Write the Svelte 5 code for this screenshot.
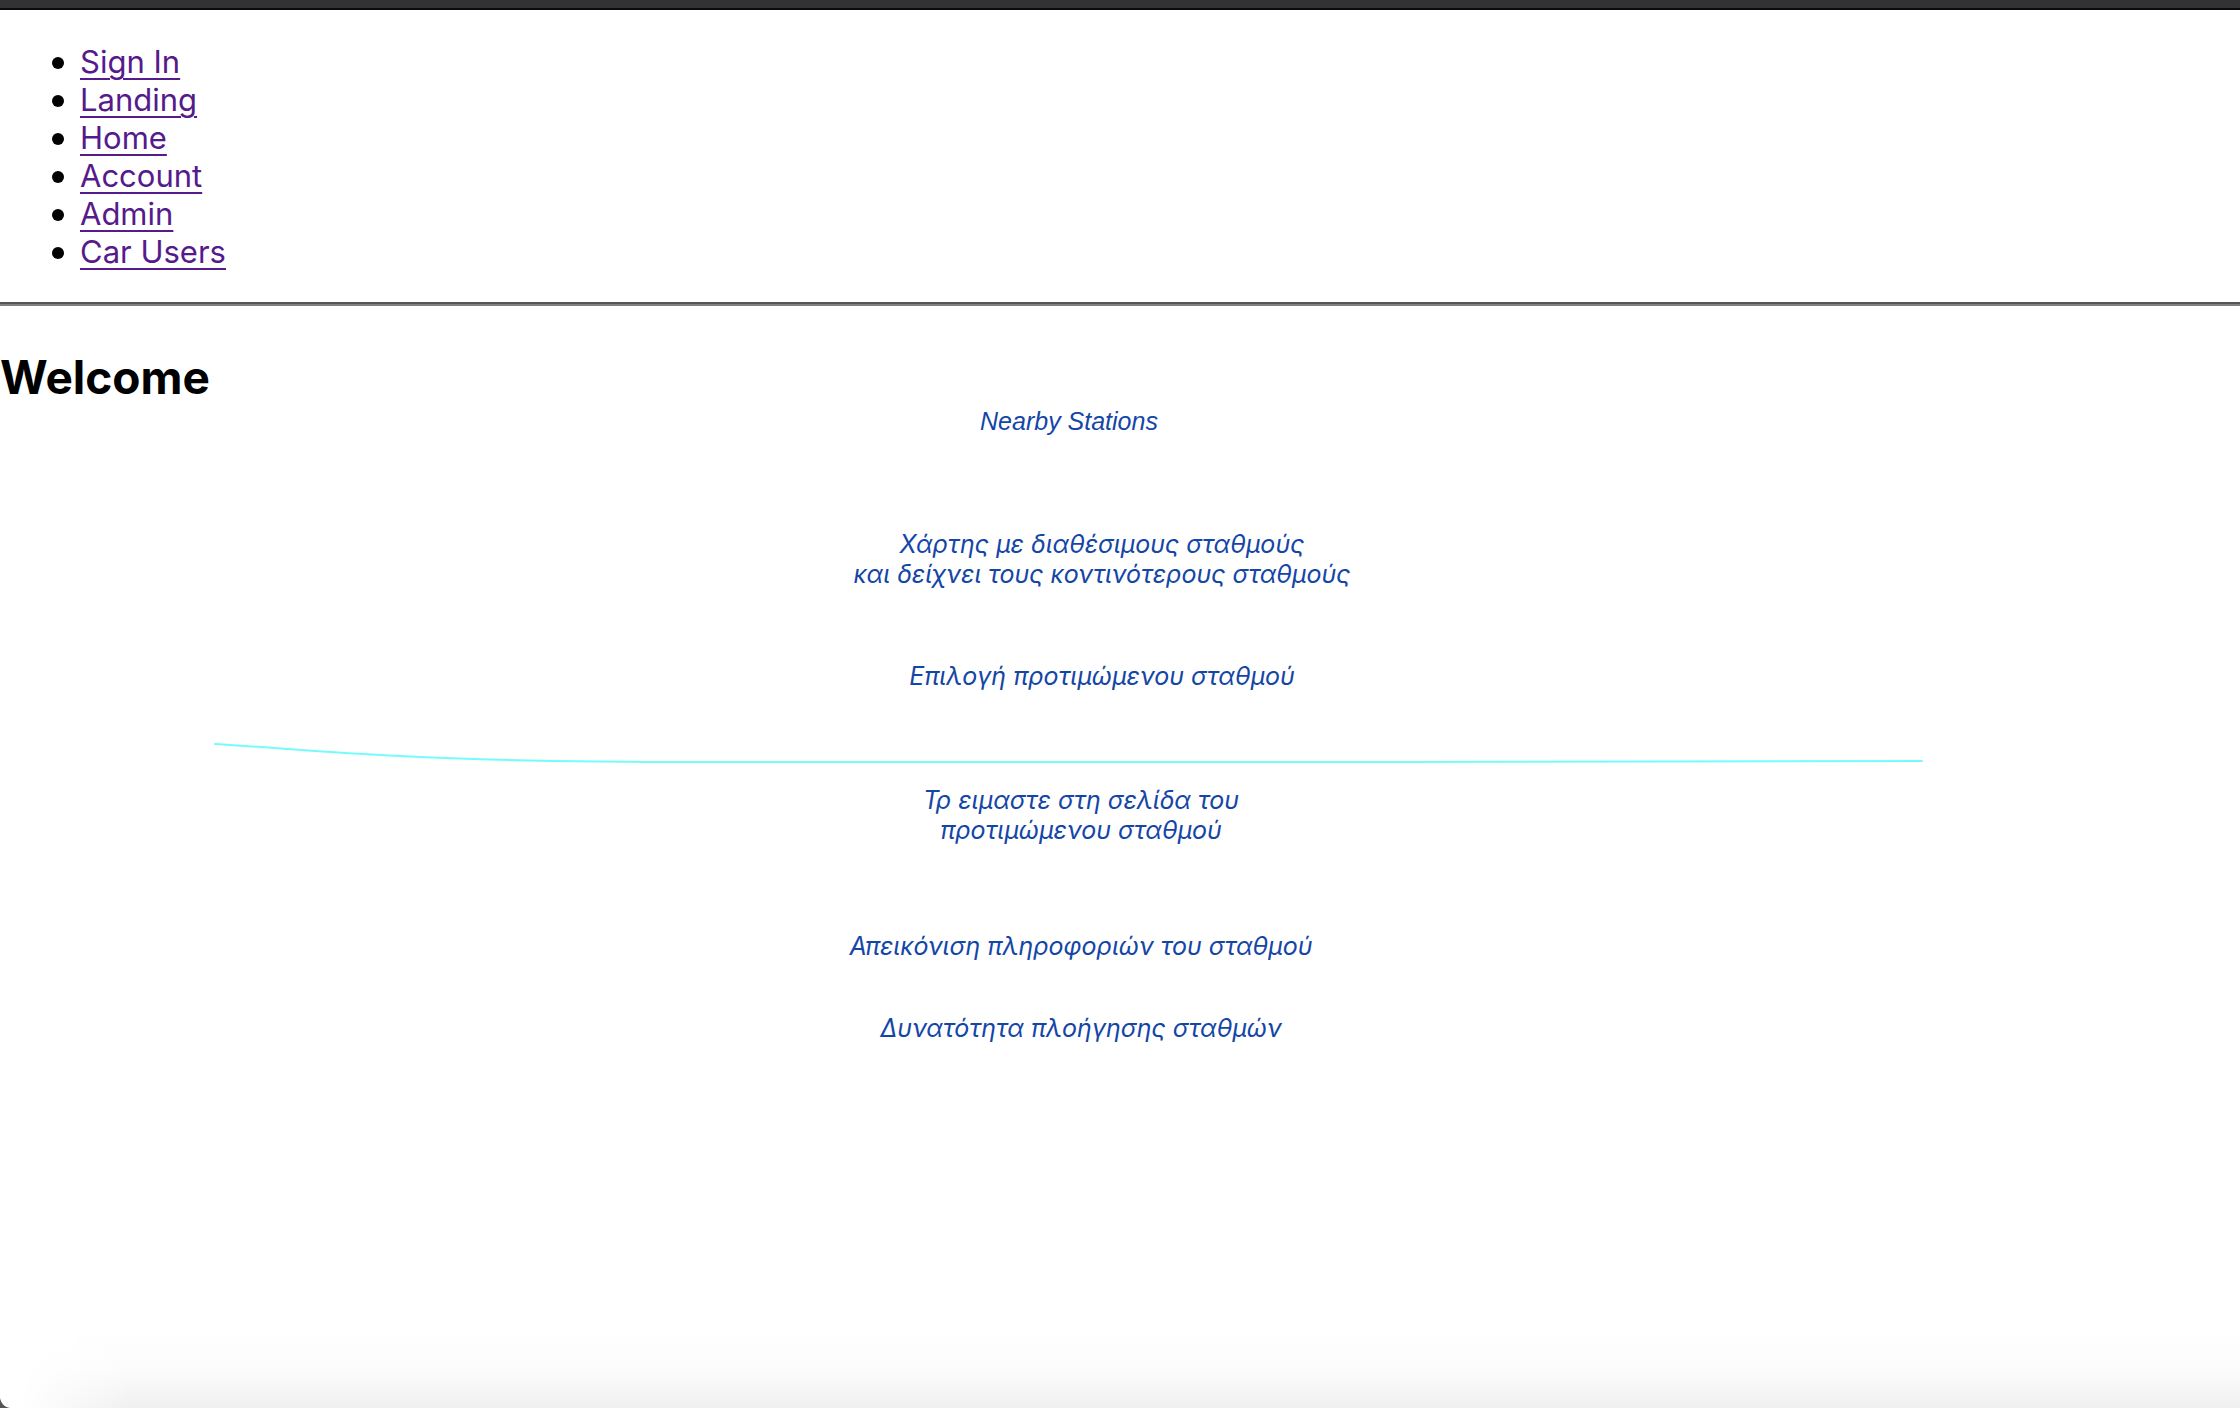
<script>
  const links = ['Sign In', 'Landing', 'Home', 'Account', 'Admin', 'Car Users'];
</script>

<div class="window">
  <div class="toolbar-edge"></div>
  <nav>
    <ul>
      {#each links as link}
        <li><a href="#{link.toLowerCase().replace(' ', '-')}">{link}</a></li>
      {/each}
    </ul>
  </nav>
  <hr />
  <main>
    <h1>Welcome</h1>
    <section class="notes">
      <h2>Nearby Stations</h2>
      <div class="map-notes">
        <p>Χάρτης με διαθέσιμους σταθμούς<br />και δείχνει τους κοντινότερους σταθμούς</p>
        <p>Επιλογή προτιμώμενου σταθμού</p>
      </div>
      <svg class="divider" viewBox="0 0 2240 30" preserveAspectRatio="none" aria-hidden="true">
        <path d="M215 4 C280 8 330 13 400 16 C480 20 560 22 700 22 L1400 22 L1922 21" />
      </svg>
      <div class="station-notes">
        <p>Τρ ειμαστε στη σελίδα του<br />προτιμώμενου σταθμού</p>
        <p class="info">Απεικόνιση πληροφοριών του σταθμού</p>
        <p>Δυνατότητα πλοήγησης σταθμών</p>
      </div>
    </section>
  </main>
  <div class="shade"></div>
  <svg class="corner" viewBox="0 0 10 10" aria-hidden="true">
    <path d="M0 0 C1 5 4 9 10 10 L0 10 Z" />
  </svg>
</div>

<style>
  :global(body) {
    margin: 0;
    background: #fff;
  }
  .window {
    position: relative;
    display: flex;
    flex-direction: column;
    min-height: 100vh;
    overflow: hidden;
    font-family: Inter, Roboto, sans-serif;
    color: #000;
  }
  .toolbar-edge {
    height: 8px;
    background: #323234;
    border-bottom: 2px solid #0b0b0b;
  }
  ul {
    margin: 33px 0 31px;
    padding-left: 80px;
    list-style: none;
    font-size: 31px;
    line-height: 38px;
  }
  li {
    position: relative;
  }
  li::before {
    content: '';
    position: absolute;
    left: -28px;
    top: 14px;
    width: 12px;
    height: 12px;
    border-radius: 50%;
    background: #000;
  }
  a {
    color: #551a8b;
    text-decoration: underline;
    text-decoration-thickness: 2px;
    text-underline-offset: 5px;
  }
  hr {
    width: 100%;
    box-sizing: border-box;
    height: 4px;
    margin: 0;
    border: 0;
    border-top: 2px solid #555;
    background: #808080;
  }
  h1 {
    margin: 42px 0 0;
    font-size: 46px;
    line-height: 58px;
    font-weight: 700;
  }
  .notes {
    font-style: italic;
    font-size: 25px;
    line-height: 30px;
    text-align: center;
    color: #1446a6;
  }
  h2 {
    margin: 0;
    padding-right: 102px;
    font-family: 'Liberation Sans', Arial, sans-serif;
    font-size: 25px;
    font-weight: 400;
  }
  p {
    margin: 0;
  }
  .map-notes {
    display: flex;
    flex-direction: column;
    gap: 72px;
    padding: 93px 36px 49px 0;
  }
  .divider {
    display: block;
    width: 100%;
    height: 30px;
  }
  .divider path {
    fill: none;
    stroke: #76fbfd;
    stroke-width: 2px;
    stroke-linecap: round;
    vector-effect: non-scaling-stroke;
  }
  .station-notes {
    display: flex;
    flex-direction: column;
    gap: 52px;
    padding: 15px 78px 0 0;
  }
  .info {
    margin-top: 34px;
  }
  .shade {
    position: absolute;
    left: 0;
    right: 0;
    bottom: 0;
    height: 80px;
    background: linear-gradient(to bottom, #fff 0%, #fcfcfc 50%, #f0f0f0 100%);
    mask-image: linear-gradient(to right, transparent 20px, #000 130px);
  }
  .corner {
    position: absolute;
    left: 0;
    bottom: 0;
    width: 10px;
    height: 10px;
    fill: #555;
  }
</style>
